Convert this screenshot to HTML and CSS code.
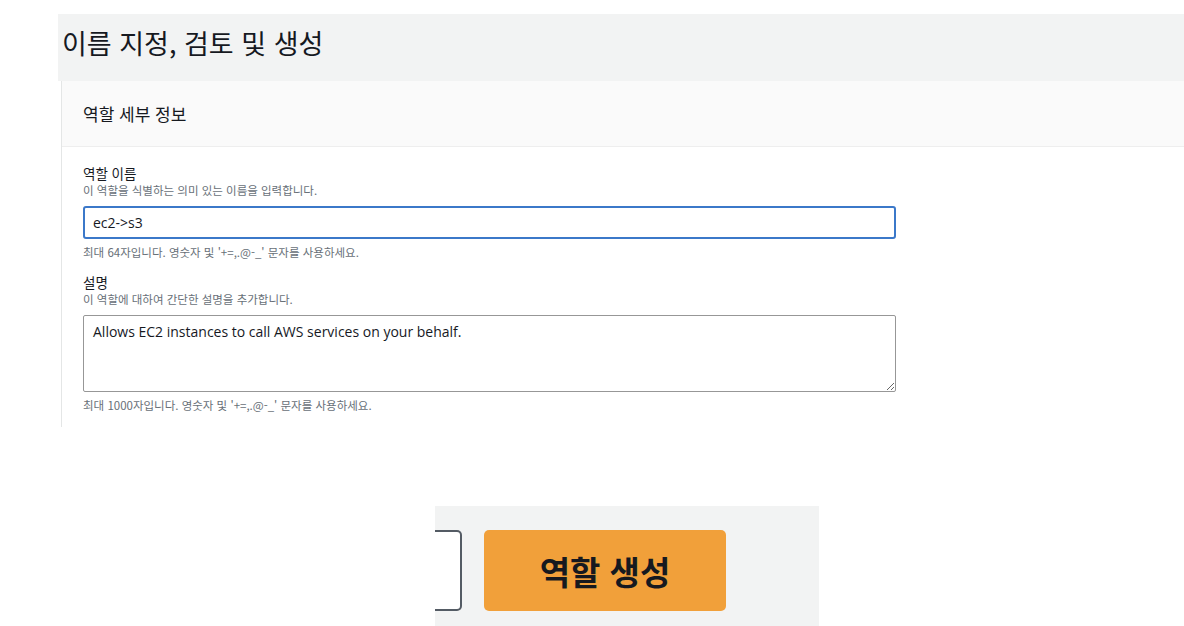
FILE: index.html
```html
<!DOCTYPE html>
<html lang="ko">
<head>
  <meta charset="UTF-8">
  <meta name="viewport" content="width=device-width, initial-scale=1.0">
  <title>이름 지정, 검토 및 생성</title>
  <link rel="stylesheet" href="styles.css">
</head>
<body>
  <div class="page">
    <div class="page-head">
      <h1>이름 지정, 검토 및 생성</h1>
    </div>
    <div class="panel">
      <div class="panel-head">
        <h2>역할 세부 정보</h2>
      </div>
      <div class="panel-body">
        <div class="field">
          <label class="field-label" for="roleName">역할 이름</label>
          <div class="field-desc">이 역할을 식별하는 의미 있는 이름을 입력합니다.</div>
          <input id="roleName" class="input" type="text" value="ec2-&gt;s3">
          <div class="field-hint">최대 64자입니다. 영숫자 및 '+=,.@-_' 문자를 사용하세요.</div>
        </div>
        <div class="field">
          <label class="field-label" for="roleDesc">설명</label>
          <div class="field-desc">이 역할에 대하여 간단한 설명을 추가합니다.</div>
          <textarea id="roleDesc" class="textarea">Allows EC2 instances to call AWS services on your behalf.</textarea>
          <div class="field-hint">최대 1000자입니다. 영숫자 및 '+=,.@-_' 문자를 사용하세요.</div>
        </div>
      </div>
    </div>
  </div>
  <div class="actions">
    <div class="btn-cancel"></div>
    <button class="btn-primary">역할 생성</button>
  </div>
</body>
</html>
```

FILE: styles.css
```css
:root { --gray:#f2f3f3; --head:#fafafa; --line:#e4e6e6; --text:#16191f; --muted:#687078; --blue:#3b78c9; }
*{box-sizing:border-box;font-family:'Open Sans','Noto Sans CJK KR',sans-serif;}
body{margin:0;background:#fff;color:var(--text);}
.page{margin:14px 0 0 58px;}
.page-head{background:var(--gray);height:67px;padding:11px 0 0 4px;}
h1{margin:0;font-size:27px;font-weight:400;line-height:36px;font-family:'Noto Sans CJK KR',sans-serif;}
.panel{margin-left:3px;border-left:1px solid var(--line);}
.panel-head{background:var(--head);height:66px;border-bottom:1px solid #eee;padding:0 0 0 21px;display:flex;align-items:center;}
h2{margin:0;font-size:17px;font-weight:400;font-family:'Noto Sans CJK KR',sans-serif;}
.panel-body{padding:17px 0 14px 21px;}
.field{width:813px;margin-bottom:13px;}
.field:last-child{margin-bottom:0;}
.field-label{display:block;font-size:13.5px;line-height:18px;font-family:'Noto Sans CJK KR',sans-serif;}
.field-desc,.field-hint{font-size:11.5px;line-height:16px;color:var(--muted);font-family:'Noto Sans CJK KR',sans-serif;}
.field-desc{margin-bottom:8px;}
.field-hint{margin-top:5px;}
.input{display:block;width:100%;height:33px;border:2px solid var(--blue);border-radius:3px;padding:0 8px;font-size:14px;color:var(--text);outline:none;}
.textarea{display:block;width:100%;height:77px;border:1px solid #979797;border-radius:2px;padding:6px 9px;font-size:14px;color:var(--text);resize:vertical;}
.actions{margin:79px 0 0 435px;width:384px;height:120px;padding-top:24px;background:var(--gray);display:flex;align-items:flex-start;gap:22px;}
.btn-cancel{width:27px;height:81px;border:2px solid #545b64;border-left:none;border-radius:0 5px 5px 0;background:#fff;}
.btn-primary{width:242px;height:81px;border:none;border-radius:5px;background:#f1a03a;color:var(--text);font-size:33px;font-weight:700;font-family:'Noto Sans CJK KR',sans-serif;cursor:pointer;}
```
